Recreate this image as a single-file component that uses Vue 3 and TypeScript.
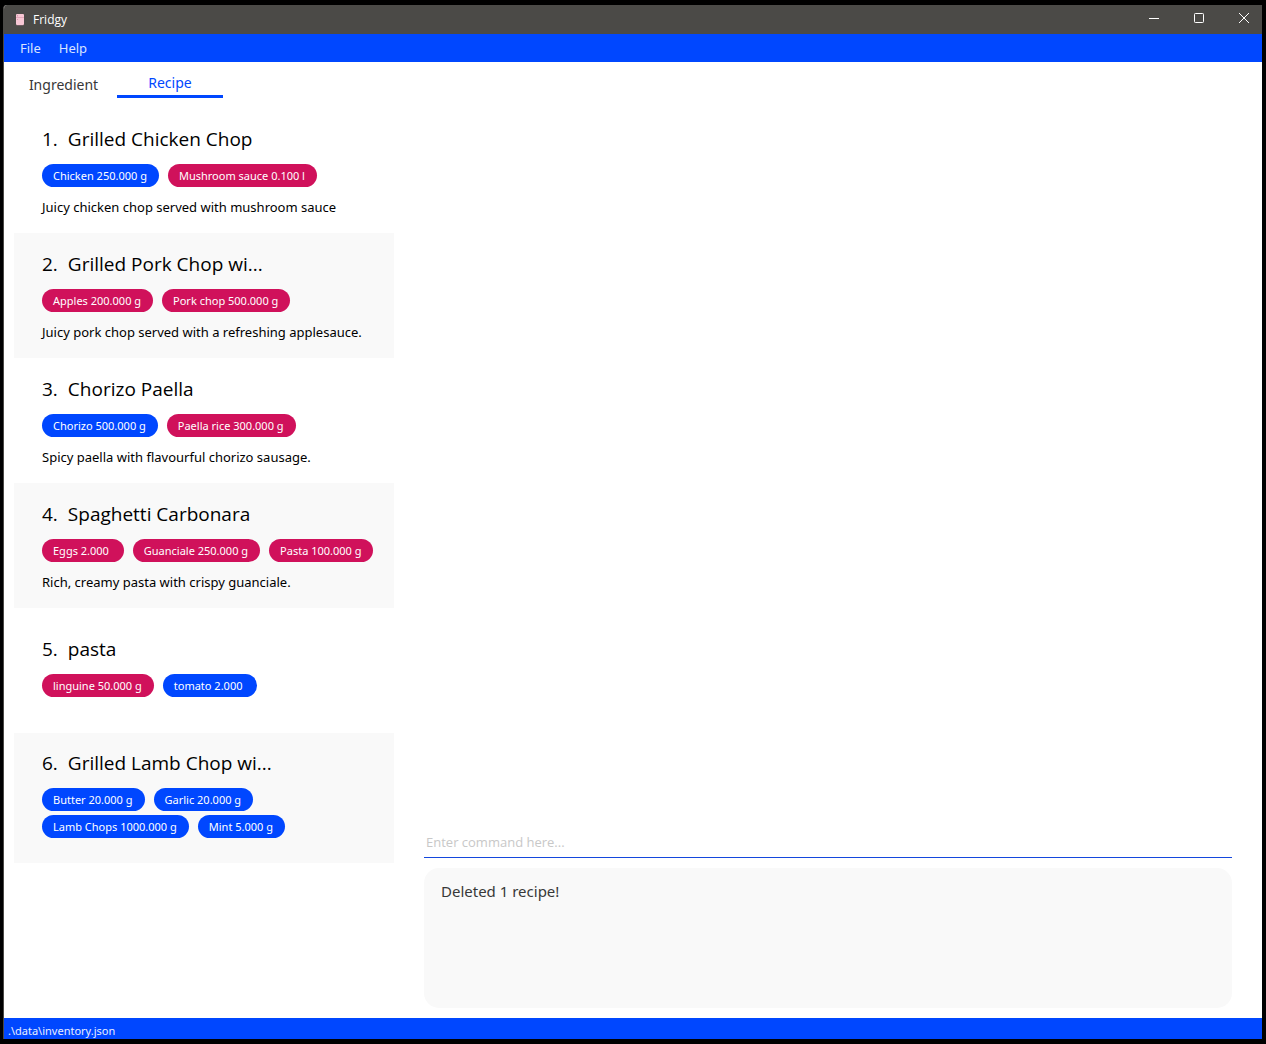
<script setup lang="ts">
import { ref } from 'vue'

interface Ingredient {
  label: string
  inStock: boolean
}

interface Recipe {
  name: string
  ingredients: Ingredient[]
  description: string
}

const tabs: string[] = ['Ingredient', 'Recipe']
const activeTab = ref('Recipe')
const command = ref('')

const recipes: Recipe[] = [
  {
    name: 'Grilled Chicken Chop',
    ingredients: [
      { label: 'Chicken 250.000 g', inStock: true },
      { label: 'Mushroom sauce 0.100 l', inStock: false },
    ],
    description: 'Juicy chicken chop served with mushroom sauce',
  },
  {
    name: 'Grilled Pork Chop wi...',
    ingredients: [
      { label: 'Apples 200.000 g', inStock: false },
      { label: 'Pork chop 500.000 g', inStock: false },
    ],
    description: 'Juicy pork chop served with a refreshing applesauce.',
  },
  {
    name: 'Chorizo Paella',
    ingredients: [
      { label: 'Chorizo 500.000 g', inStock: true },
      { label: 'Paella rice 300.000 g', inStock: false },
    ],
    description: 'Spicy paella with flavourful chorizo sausage.',
  },
  {
    name: 'Spaghetti Carbonara',
    ingredients: [
      { label: 'Eggs 2.000 ', inStock: false },
      { label: 'Guanciale 250.000 g', inStock: false },
      { label: 'Pasta 100.000 g', inStock: false },
    ],
    description: 'Rich, creamy pasta with crispy guanciale.',
  },
  {
    name: 'pasta',
    ingredients: [
      { label: 'linguine 50.000 g', inStock: false },
      { label: 'tomato 2.000 ', inStock: true },
    ],
    description: '',
  },
  {
    name: 'Grilled Lamb Chop wi...',
    ingredients: [
      { label: 'Butter 20.000 g', inStock: true },
      { label: 'Garlic 20.000 g', inStock: true },
      { label: 'Lamb Chops 1000.000 g', inStock: true },
      { label: 'Mint 5.000 g', inStock: true },
    ],
    description: '',
  },
]
</script>

<template>
  <div class="desktop">
    <div class="window">
      <header class="titlebar">
        <svg class="app-icon" width="10" height="13" viewBox="0 0 10 13" aria-hidden="true">
          <rect x="1" y="1" width="8" height="11" rx="1" fill="#f7c6d4" />
          <path d="M1 4.5h8" stroke="#e3a9bb" />
          <path d="M2.5 2v1.5M2.5 6v1" stroke="#d99bb0" />
          <path d="M1.5 12.5h7" stroke="#6d5a5f" />
        </svg>
        <span class="app-name">Fridgy</span>
        <div class="controls">
          <button type="button" aria-label="Minimize">
            <svg width="10" height="10" viewBox="0 0 10 10"><path d="M0 5.5h10" stroke="#fff" /></svg>
          </button>
          <button type="button" aria-label="Maximize">
            <svg width="10" height="10" viewBox="0 0 10 10"><rect x="0.5" y="0.5" width="9" height="9" rx="0.8" fill="none" stroke="#fff" /></svg>
          </button>
          <button type="button" aria-label="Close">
            <svg width="10" height="10" viewBox="0 0 10 10"><path d="M0 0l10 10M10 0L0 10" stroke="#fff" /></svg>
          </button>
        </div>
      </header>

      <nav class="menubar">
        <button type="button">File</button>
        <button type="button">Help</button>
      </nav>

      <main class="body">
        <section class="list-pane">
          <div class="tabs" role="tablist">
            <button
              v-for="tab in tabs"
              :key="tab"
              type="button"
              role="tab"
              class="tab"
              :class="{ active: tab === activeTab }"
              :aria-selected="tab === activeTab"
              @click="activeTab = tab"
            >{{ tab }}</button>
          </div>
          <ol class="recipes">
            <li v-for="(recipe, i) in recipes" :key="i" class="recipe">
              <h2 class="name"><span>{{ i + 1 }}.</span><span>{{ recipe.name }}</span></h2>
              <div class="tags">
                <span
                  v-for="item in recipe.ingredients"
                  :key="item.label"
                  class="tag"
                  :class="{ missing: !item.inStock }"
                >{{ item.label }}</span>
              </div>
              <p v-if="recipe.description" class="description">{{ recipe.description }}</p>
            </li>
          </ol>
        </section>

        <section class="command-pane">
          <input v-model="command" class="command" type="text" aria-label="Command" placeholder="Enter command here..." />
          <output class="result">Deleted 1 recipe!</output>
        </section>
      </main>

      <footer class="statusbar">.\data\inventory.json</footer>
    </div>
  </div>
</template>

<style>
body {
  background: #000;
}
</style>

<style scoped>
.desktop {
  box-sizing: border-box;
  display: flex;
  min-height: 100vh;
  padding: 5px 4px 5px 3px;
  background: #000;
  font-family: "Noto Sans", "Open Sans", sans-serif;
  color: #000;
}

button {
  padding: 0;
  border: 0;
  background: none;
  font: inherit;
  color: inherit;
}

.window {
  flex: 1;
  display: flex;
  flex-direction: column;
  border-left: 1px solid #4a4946;
  border-top-left-radius: 4px;
  background: #fff;
  overflow: hidden;
}

.titlebar {
  display: flex;
  align-items: center;
  height: 28px;
  padding: 0 0 1px 11px;
  background: #4b4a47;
  color: #fff;
  font-family: "Open Sans", sans-serif;
  font-size: 12px;
}

.app-name {
  margin-left: 8px;
}

.controls {
  display: flex;
  align-self: stretch;
  gap: 9px;
  margin-left: auto;
  padding-bottom: 2px;
}

.controls button {
  display: flex;
  align-items: center;
  justify-content: center;
  width: 36px;
}

.controls svg {
  display: block;
}

.menubar {
  display: flex;
  align-items: center;
  gap: 18px;
  height: 28px;
  padding-left: 16px;
  background: #0047ff;
  color: #d9e3ff;
  font-size: 13px;
}

.body {
  flex: 1;
  display: flex;
  padding: 0 30px 10px 10px;
}

.list-pane {
  width: 380px;
}

.tabs {
  display: flex;
  margin-left: -4px;
  height: 36px;
}

.tab {
  width: 107px;
  padding-top: 9px;
  color: #383838;
  font-size: 14px;
  line-height: 20px;
}

.tab.active {
  width: 106px;
  border-bottom: 3px solid #0047ff;
  color: #0047ff;
}

.recipes {
  margin: 10px 0 0;
  padding: 0;
  list-style: none;
}

.recipe {
  box-sizing: border-box;
  display: flex;
  flex-direction: column;
  justify-content: center;
  min-height: 125px;
  padding: 16px 12px 16px 28px;
}

.recipe:nth-child(even) {
  background: #f9f9f9;
}

.name {
  display: flex;
  gap: 10px;
  margin: 0 0 11px;
  font-family: "Open Sans", sans-serif;
  font-size: 19px;
  font-weight: 400;
  line-height: 28px;
}

.tags {
  display: flex;
  flex-wrap: wrap;
  gap: 4px 9px;
  margin-bottom: 9px;
}

.tag {
  padding: 0 12px 0 11px;
  border-radius: 12px;
  background: #0047ff;
  color: #fff;
  font-size: 11px;
  line-height: 23px;
  white-space: pre;
}

.tag.missing {
  background: #d0115b;
}

.description {
  margin: 1px 0 0;
  font-size: 13px;
  line-height: 20px;
  white-space: nowrap;
}

.command-pane {
  flex: 1;
  display: flex;
  flex-direction: column;
  justify-content: flex-end;
  margin-left: 30px;
}

.command {
  box-sizing: border-box;
  width: 100%;
  height: 30px;
  padding: 0 2px 1px;
  border: 0;
  border-bottom: 1px solid #1447dd;
  outline: 0;
  background: none;
  font-family: "Open Sans", sans-serif;
  font-size: 13px;
}

.command::placeholder {
  color: #c8c8c8;
  opacity: 1;
}

.result {
  box-sizing: border-box;
  height: 140px;
  margin-top: 10px;
  padding: 13px 17px;
  border-radius: 15px;
  background: #f9f9f9;
  color: #383838;
  font-size: 15px;
  line-height: 20px;
}

.statusbar {
  padding: 4px 4px 0;
  background: #0047ff;
  color: #e8eeff;
  font-size: 11px;
  line-height: 17px;
}
</style>
